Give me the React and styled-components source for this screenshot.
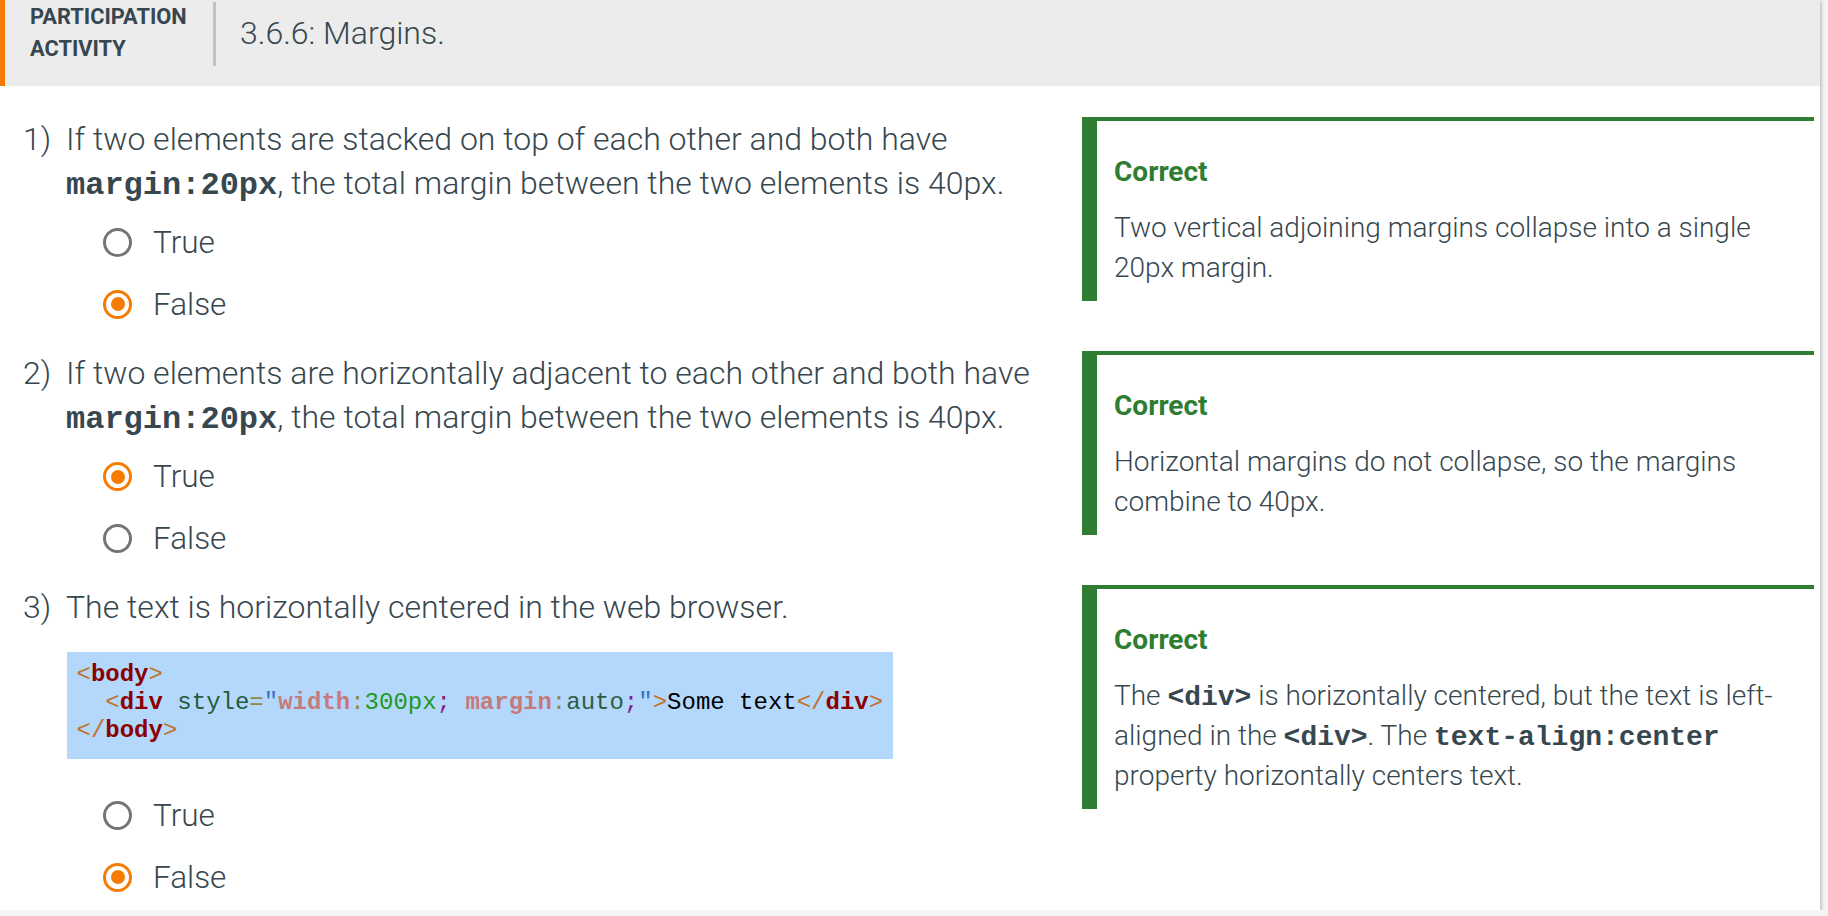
import React from "react";
import styled, { createGlobalStyle } from "styled-components";

const GlobalStyle = createGlobalStyle`
  html, body { margin: 0; padding: 0; background: #f4f4f4; }
  body { font-family: Roboto, "Liberation Sans", sans-serif; color: #37474f; }
  * { box-sizing: border-box; }
`;

const Panel = styled.section`
  width: 1820px;
  background: #ffffff;
  box-shadow: 1px 1px 4px rgba(0, 0, 0, 0.28);
`;

const Header = styled.header`
  height: 86px;
  background: #ececec;
  border-left: 5px solid #f57c00;
  display: flex;
  align-items: flex-start;
  padding-left: 25px;
`;

const Label = styled.div`
  font-family: Roboto, sans-serif;
  font-weight: 700;
  font-size: 21.8px;
  line-height: 32px;
  padding-top: 1px;
  color: #37474f;
  width: 183px;
  text-transform: uppercase;
`;

const Divider = styled.div`
  width: 3px;
  height: 64px;
  margin-top: 2px;
  background: #c2c2c2;
`;

const Title = styled.h2`
  margin: 0 0 0 24px;
  font-family: Roboto, sans-serif;
  font-weight: 300;
  font-size: 32px;
  line-height: 66px;
  color: #37474f;
`;

const Rows = styled.div`
  display: flex;
  flex-direction: column;
  gap: 25px;
  padding: 31px 6px 11px 23px;
`;

const Row = styled.div`
  display: grid;
  grid-template-columns: 1fr 732px;
  column-gap: 22px;
  align-items: start;
`;

const Question = styled.div`
  display: flex;
  flex-direction: column;
`;

const Prompt = styled.div`
  display: flex;
  font-weight: 300;
  font-size: 32px;
  line-height: 44px;
  color: #37474f;
`;

const Num = styled.span`
  flex: 0 0 43px;
`;

const PromptText = styled.span`
  flex: 1;
`;

const Mono = styled.code`
  font-family: "Liberation Mono", "Courier New", monospace;
  font-weight: 700;
  font-size: ${(p) => p.$size || 32}px;
  line-height: 1;
  color: #37474f;
`;

const Options = styled.div`
  display: flex;
  flex-direction: column;
  gap: 17.5px;
  margin-top: ${(p) => p.$top || 15.5}px;
  padding-left: 80px;
`;

const Option = styled.label`
  display: flex;
  align-items: center;
  gap: 21px;
  height: 44px;
  font-weight: 300;
  font-size: 31.5px;
  color: #37474f;
`;

const Radio = styled.span`
  width: 29px;
  height: 29px;
  border-radius: 50%;
  border: 3.5px solid ${(p) => (p.$checked ? "#f57c00" : "#757575")};
  display: flex;
  align-items: center;
  justify-content: center;
  &::after {
    content: "";
    width: 14px;
    height: 14px;
    border-radius: 50%;
    background: ${(p) => (p.$checked ? "#f57c00" : "transparent")};
  }
`;

const CodeBlock = styled.pre`
  margin: 22.5px 0 0 43.5px;
  width: 826px;
  background: #b4d8fc;
  padding: 9px 10px 14px;
  font-family: "Liberation Mono", "Courier New", monospace;
  font-size: 24px;
  line-height: 28px;
  color: #000;
`;

const Tok = styled.span`
  color: ${(p) => p.$c};
  font-weight: ${(p) => (p.$b ? 700 : 400)};
`;

const Feedback = styled.div`
  border-top: 4px solid #2e7d32;
  border-left: 15px solid #2e7d32;
  padding: 31px 24px 13px 17px;
`;

const FeedbackTitle = styled.div`
  font-weight: 700;
  font-size: 28px;
  line-height: 40px;
  color: #2e7d32;
`;

const FeedbackText = styled.p`
  margin: 15.5px 0 0;
  font-weight: 300;
  font-size: 28px;
  line-height: 40px;
  color: #37474f;
`;

const C = {
  br: "#c0712a",
  tag: "#8b0000",
  attr: "#245c3c",
  eq: "#8c8c3c",
  q: "#3a6fc4",
  prop: "#c57b7b",
  colon: "#8c8c3c",
  val: "#1f9a1f",
  semi: "#8a1a8a",
  val2: "#2f5e3e",
};

function Choice({ label, checked }) {
  return (
    <Option>
      <Radio $checked={checked} />
      {label}
    </Option>
  );
}

function Explanation({ children }) {
  return (
    <Feedback>
      <FeedbackTitle>Correct</FeedbackTitle>
      <FeedbackText>{children}</FeedbackText>
    </Feedback>
  );
}

export default function App() {
  return (
    <>
      <GlobalStyle />
      <Panel>
        <Header>
          <Label>
            Participation
            <br />
            Activity
          </Label>
          <Divider />
          <Title>3.6.6: Margins.</Title>
        </Header>
        <Rows>
          <Row>
            <Question>
              <Prompt>
                <Num>1)</Num>
                <PromptText>
                  If two elements are stacked on top of each other and both have{" "}
                  <Mono>margin:20px</Mono>, the total margin between the two elements is 40px.
                </PromptText>
              </Prompt>
              <Options>
                <Choice label="True" />
                <Choice label="False" checked />
              </Options>
            </Question>
            <Explanation>
              Two vertical adjoining margins collapse into a single 20px margin.
            </Explanation>
          </Row>
          <Row>
            <Question>
              <Prompt>
                <Num>2)</Num>
                <PromptText>
                  If two elements are horizontally adjacent to each other and both have{" "}
                  <Mono>margin:20px</Mono>, the total margin between the two elements is 40px.
                </PromptText>
              </Prompt>
              <Options>
                <Choice label="True" checked />
                <Choice label="False" />
              </Options>
            </Question>
            <Explanation>
              Horizontal margins do not collapse, so the margins combine to 40px.
            </Explanation>
          </Row>
          <Row>
            <Question>
              <Prompt>
                <Num>3)</Num>
                <PromptText>The text is horizontally centered in the web browser.</PromptText>
              </Prompt>
              <CodeBlock>
                <Tok $c={C.br}>&lt;</Tok>
                <Tok $c={C.tag} $b>body</Tok>
                <Tok $c={C.br}>&gt;</Tok>
                {"\n  "}
                <Tok $c={C.br}>&lt;</Tok>
                <Tok $c={C.tag} $b>div</Tok>{" "}
                <Tok $c={C.attr}>style</Tok>
                <Tok $c={C.eq}>=</Tok>
                <Tok $c={C.q}>"</Tok>
                <Tok $c={C.prop} $b>width</Tok>
                <Tok $c={C.colon}>:</Tok>
                <Tok $c={C.val}>300px</Tok>
                <Tok $c={C.semi}>;</Tok>{" "}
                <Tok $c={C.prop} $b>margin</Tok>
                <Tok $c={C.colon}>:</Tok>
                <Tok $c={C.val2}>auto</Tok>
                <Tok $c={C.semi}>;</Tok>
                <Tok $c={C.q}>"</Tok>
                <Tok $c={C.br}>&gt;</Tok>
                Some text
                <Tok $c={C.br}>&lt;/</Tok>
                <Tok $c={C.tag} $b>div</Tok>
                <Tok $c={C.br}>&gt;</Tok>
                {"\n"}
                <Tok $c={C.br}>&lt;/</Tok>
                <Tok $c={C.tag} $b>body</Tok>
                <Tok $c={C.br}>&gt;</Tok>
              </CodeBlock>
              <Options $top={35}>
                <Choice label="True" />
                <Choice label="False" checked />
              </Options>
            </Question>
            <Explanation>
              The <Mono $size={28}>&lt;div&gt;</Mono> is horizontally centered, but the text is
              left-aligned in the <Mono $size={28}>&lt;div&gt;</Mono>. The{" "}
              <Mono $size={28}>text-align:center</Mono> property horizontally centers text.
            </Explanation>
          </Row>
        </Rows>
      </Panel>
    </>
  );
}
